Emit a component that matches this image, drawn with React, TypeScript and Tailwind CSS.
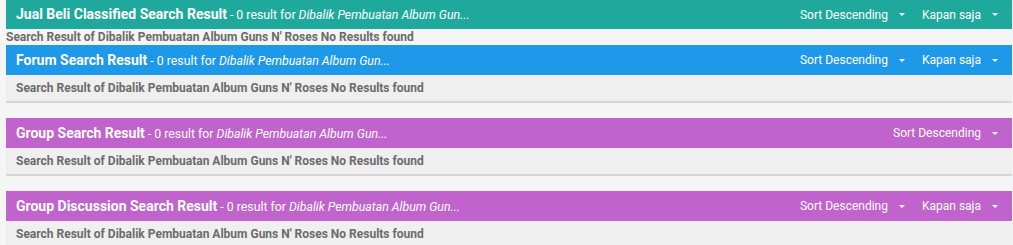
import React from "react";

type Section = {
  title: string;
  color: string;
  filters: string[];
  plain?: boolean;
};

const query = "Dibalik Pembuatan Album Gun...";
const noResult = "Search Result of Dibalik Pembuatan Album Guns N' Roses No Results found";

const sections: Section[] = [
  { title: "Jual Beli Classified Search Result", color: "bg-[#1fa99c]", filters: ["Sort Descending", "Kapan saja"], plain: true },
  { title: "Forum Search Result", color: "bg-[#1e98e9]", filters: ["Sort Descending", "Kapan saja"] },
  { title: "Group Search Result", color: "bg-[#c063cd]", filters: ["Sort Descending"] },
  { title: "Group Discussion Search Result", color: "bg-[#c063cd]", filters: ["Sort Descending", "Kapan saja"] },
];

function Caret() {
  return (
    <svg className="ml-[11px] h-[3px] w-[6px]" viewBox="0 0 6 3" fill="#fff">
      <path d="M0 0h6L3 3z" />
    </svg>
  );
}

function ResultHeader({ section, first }: { section: Section; first?: boolean }) {
  return (
    <div
      className={`flex items-center justify-between pl-[10px] pr-[14px] text-white ${section.color} ${first ? "h-[29px]" : "h-[30px]"}`}
    >
      <div className="flex items-baseline whitespace-nowrap">
        <span className="text-[14px] font-bold">{section.title}</span>
        <span className="ml-[3px] text-[12.3px]">
          - 0 result for <i>{query}</i>
        </span>
      </div>
      <div className="flex items-center gap-[17px] text-[12px]">
        {section.filters.map((f) => (
          <button key={f} type="button" className="flex items-center">
            {f}
            <Caret />
          </button>
        ))}
      </div>
    </div>
  );
}

export default function App() {
  return (
    <div className="h-[245px] overflow-hidden bg-[#f5f5f5] pl-[6px] pr-[1px] font-['Roboto',sans-serif]">
      {sections.map((section, i) => (
        <section key={section.title} className={i > 1 ? "mt-[15px]" : ""}>
          <ResultHeader section={section} first={i === 0} />
          {section.plain ? (
            <p className="h-[16px] text-[12px] font-bold leading-[16px] text-[#6b6b6b]">{noResult}</p>
          ) : (
            <div className="flex h-[28px] items-center border-b-2 border-[#d6d6d6] bg-[#efefef] px-[10px]">
              <p className="text-[12px] font-bold text-[#6b6b6b]">{noResult}</p>
            </div>
          )}
        </section>
      ))}
    </div>
  );
}
